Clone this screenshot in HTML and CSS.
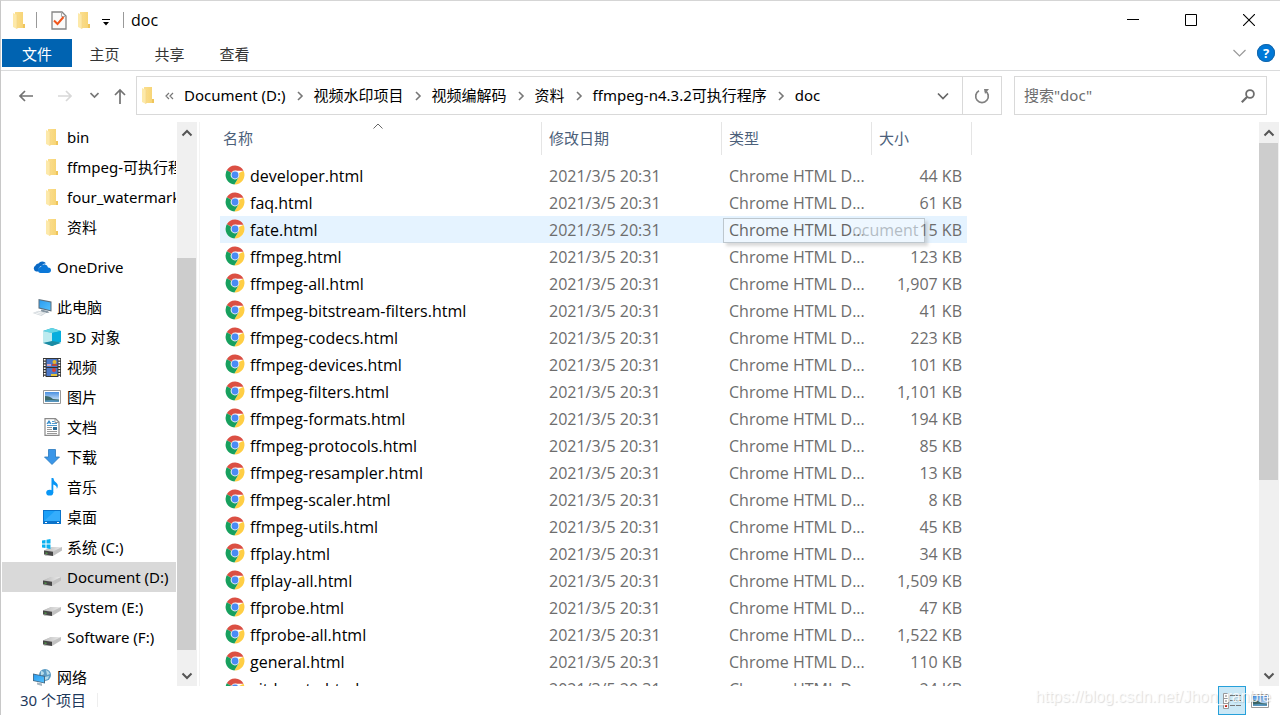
FILE: index.html
```
<!DOCTYPE html>
<html lang="zh-CN">
<head>
  <meta charset="UTF-8">
  <meta name="viewport" content="width=device-width, initial-scale=1.0">
  <title>doc</title>
  <link rel="stylesheet" href="styles.css">
</head>
<body>
  <!-- shared icons -->
  <svg class="sprite" aria-hidden="true">
    <defs>
      <linearGradient id="gFolder" x1="0" x2="1"><stop offset="0" stop-color="#fbdf8f"/><stop offset="1" stop-color="#f6d271"/></linearGradient>
      <linearGradient id="gDisk" x1="0" x2="1"><stop offset="0" stop-color="#b9b9b9"/><stop offset="1" stop-color="#ececec"/></linearGradient>
      <linearGradient id="gScreen" x1="0" y1="0" x2="1" y2="1"><stop offset="0" stop-color="#2a9cf0"/><stop offset="1" stop-color="#55c0fb"/></linearGradient>
      <linearGradient id="gSky" x1="0" y1="0" x2="0" y2="1"><stop offset="0" stop-color="#4a90e0"/><stop offset="1" stop-color="#e6f3fc"/></linearGradient>
    </defs>
    <symbol id="folder" viewBox="0 0 12 17">
      <path d="M2 0h8v12h2v4H4L2 15z" fill="url(#gFolder)"/>
      <path d="M10 12h2v4h-2z" fill="#efc55c"/>
      <path d="M0 1l4 2v14l-4-2z" fill="#fde9a9"/>
      <path d="M4 3v14" stroke="#f3d588" stroke-width=".6"/>
    </symbol>
    <symbol id="chrome" viewBox="0 0 20 20">
      <circle cx="10" cy="10" r="9.5" fill="#fff"/>
      <path d="M10 10L1.8 5.3A9.5 9.5 0 0 1 18.5 5.8H10z" fill="#db4f43"/>
      <path d="M10 10L18.5 5.8A9.5 9.5 0 0 1 9.4 19.5L13.8 12z" fill="#ffce44"/>
      <path d="M10 10L1.8 5.3A9.5 9.5 0 0 0 9.4 19.5L13.8 12z" fill="#17a05e"/>
      <circle cx="10" cy="10" r="4.4" fill="#f1f1f1"/>
      <circle cx="10" cy="10" r="3.4" fill="#4a8bf5"/>
    </symbol>
    <symbol id="disk" viewBox="0 0 18 18">
      <path d="M0 12.500L8 9h10v3.500L9 18H1.500L0 16.500z" fill="#c2c2c2"/>
      <path d="M0 12.500L8 9h10l-9 4.500z" fill="url(#gDisk)"/>
      <path d="M0 12.500l9 1.200V18L0 16.200z" fill="#474747"/>
      <path d="M1.500 15l2 .3" stroke="#54b948" stroke-width="1"/>
    </symbol>
    <symbol id="picture" viewBox="0 0 18 14">
      <path d="M.5.5h17v13H.5z" fill="#fff" stroke="#999"/>
      <path d="M2 2h14v10H2z" fill="url(#gSky)"/>
      <path d="M2 6q5 0 8 3l6 .5V12H2z" fill="#3e6a6b"/>
      <path d="M2 10.500q6-1 14 0V12H2z" fill="#5796bf"/>
    </symbol>
    <symbol id="right" viewBox="0 0 8 10"><path d="M2 1l4 4-4 4" fill="none" stroke="#777" stroke-width="1.600"/></symbol>
    <symbol id="up" viewBox="0 0 12 8"><path d="M1.500 6.500L6 2l4.500 4.500" fill="none" stroke="#555" stroke-width="2"/></symbol>
    <symbol id="down" viewBox="0 0 12 8"><path d="M1.500 1.500L6 6l4.500-4.500" fill="none" stroke="#555" stroke-width="2"/></symbol>
  </svg>

  <div class="window">
    <header class="title-bar">
      <svg class="folder" width="12" height="17"><use href="#folder"/></svg>
      <span class="divider"></span>
      <button class="icon-btn check" aria-label="属性">
        <svg width="16" height="19" viewBox="0 0 16 19"><path d="M1 1h10l4 4v13H1z" fill="#fafafa" stroke="#858585" stroke-width="1.300"/><path d="M10.500 1v4.500H15" fill="none" stroke="#aaa"/><path d="M3 9.500l3.500 3.500L12.500 6" fill="none" stroke="#f0561d" stroke-width="2"/></svg>
      </button>
      <button class="icon-btn" aria-label="新建文件夹"><svg width="12" height="17"><use href="#folder"/></svg></button>
      <button class="icon-btn customize" aria-label="自定义快速访问工具栏">
        <svg width="8" height="7" viewBox="0 0 8 7"><path d="M0 0h8v1H0zM1 3h6L4 6.500z" fill="#000"/></svg>
      </button>
      <span class="divider"></span>
      <h1>doc</h1>
      <div class="window-buttons">
        <button aria-label="最小化"><svg width="12" height="12" viewBox="0 0 12 12"><path d="M0 5.500h12" stroke="#000"/></svg></button>
        <button aria-label="最大化"><svg width="12" height="12" viewBox="0 0 12 12"><path d="M.5.5h11v11H.5z" fill="none" stroke="#000"/></svg></button>
        <button aria-label="关闭"><svg width="12" height="12" viewBox="0 0 12 12"><path d="M0 0l12 12M12 0L0 12" stroke="#000" stroke-width="1.100"/></svg></button>
      </div>
    </header>

    <nav class="tabs">
      <a href="#" class="active">文件</a>
      <a href="#">主页</a>
      <a href="#">共享</a>
      <a href="#">查看</a>
      <button class="icon-btn expand" aria-label="展开功能区"><svg width="13" height="8" viewBox="0 0 13 8"><path d="M.5 1l6 6 6-6" fill="none" stroke="#999" stroke-width="1.200"/></svg></button>
      <button class="help" aria-label="帮助">?</button>
    </nav>

    <div class="address-row">
      <div class="history">
        <button class="icon-btn" aria-label="后退"><svg width="16" height="12" viewBox="0 0 16 12"><path d="M15 6H2M7 1L2 6l5 5" fill="none" stroke="#737373" stroke-width="1.700"/></svg></button>
        <button class="icon-btn" aria-label="前进"><svg width="16" height="12" viewBox="0 0 16 12"><path d="M1 6h13M9 1l5 5-5 5" fill="none" stroke="#d8d8d8" stroke-width="1.700"/></svg></button>
        <button class="icon-btn" aria-label="最近浏览的位置"><svg width="9" height="7" viewBox="0 0 9 7"><path d="M.5 1l4 4 4-4" fill="none" stroke="#777" stroke-width="1.700"/></svg></button>
        <button class="icon-btn" aria-label="上移"><svg width="12" height="16" viewBox="0 0 12 16"><path d="M6 16V2M1 7l5-5 5 5" fill="none" stroke="#737373" stroke-width="1.700"/></svg></button>
      </div>
      <div class="address">
        <svg class="folder" width="12" height="17"><use href="#folder"/></svg>
        <svg class="more" width="9" height="8" viewBox="0 0 9 8"><path d="M4 1L1 4l3 3M8 1L5 4l3 3" fill="none" stroke="#777" stroke-width="1.200"/></svg>
        <a href="#">Document (D:)</a>
        <svg width="8" height="10"><use href="#right"/></svg>
        <a href="#">视频水印项目</a>
        <svg width="8" height="10"><use href="#right"/></svg>
        <a href="#">视频编解码</a>
        <svg width="8" height="10"><use href="#right"/></svg>
        <a href="#">资料</a>
        <svg width="8" height="10"><use href="#right"/></svg>
        <a href="#">ffmpeg-n4.3.2可执行程序</a>
        <svg width="8" height="10"><use href="#right"/></svg>
        <a href="#">doc</a>
        <button class="icon-btn drop" aria-label="以前的位置"><svg width="12" height="8" viewBox="0 0 12 8"><path d="M1 1.500l5 5 5-5" fill="none" stroke="#666" stroke-width="1.700"/></svg></button>
        <button class="icon-btn refresh" aria-label="刷新"><svg width="16" height="16" viewBox="0 0 16 16"><path d="M5 2.700A6.300 6.300 0 1 0 11 2.700" fill="none" stroke="#808080" stroke-width="1.700"/><path d="M10 1h5l-4 5z" fill="#808080"/></svg></button>
      </div>
      <label class="search">
        <input type="search" placeholder='搜索"doc"' aria-label="搜索">
        <svg width="14" height="14" viewBox="0 0 14 14"><circle cx="9" cy="5" r="3.900" fill="none" stroke="#6d6d6d" stroke-width="1.800"/><path d="M6 8L.8 13.200" stroke="#6d6d6d" stroke-width="2.200"/></svg>
      </label>
    </div>

    <main class="content">
      <nav class="tree">
        <ul>
          <li><a href="#"><svg width="12" height="17"><use href="#folder"/></svg>bin</a></li>
          <li><a href="#"><svg width="12" height="17"><use href="#folder"/></svg>ffmpeg-可执行程序</a></li>
          <li><a href="#"><svg width="12" height="17"><use href="#folder"/></svg>four_watermark</a></li>
          <li><a href="#"><svg width="12" height="17"><use href="#folder"/></svg>资料</a></li>
        </ul>
        <ul>
          <li class="root"><a href="#"><svg width="18" height="12" viewBox="0 0 18 12"><path d="M3 10.500a3.300 3.300 0 0 1-.5-6Q3.500 2.500 5.500 2.600A4.600 4.600 0 0 1 13 2.200Q9.500 2.500 8.600 5 5 5.500 5.200 10.500z" fill="#0a69c4"/><path d="M8 12a3 3 0 0 1-.2-6Q9 3 12 3.400q2.500.4 3 3Q18 6.600 18 9.300 17.800 12 15 12z" fill="#0b78d8"/></svg>OneDrive</a></li>
        </ul>
        <ul>
          <li class="root"><a href="#"><svg width="19" height="17" viewBox="0 0 19 17"><path d="M6 0l13 2.500v10L6 9.500z" fill="#5b6d7b"/><path d="M7 1.200l11 2.200v7.800L7 8.500z" fill="url(#gScreen)"/><path d="M9 10.500l6 1.500 2 1.500-3 .5-6-1.500z" fill="#8796a2"/><path d="M0 14l6-2.200 8 2L9 17z" fill="#d4dade"/><path d="M3 14l6 1.500M5 13l6 1.500" stroke="#fff" stroke-width=".7"/></svg>此电脑</a></li>
          <li><a href="#"><svg width="18" height="18" viewBox="0 0 18 18"><path d="M9 0l9 3v11l-9 4-9-4V3z" fill="#1aa0bd"/><path d="M0 3l9-3 9 3-9 2z" fill="#63d6e6"/><path d="M0 3l9 2v9l-9 1z" fill="#bdebef"/><path d="M9 5l9-2v11l-9-1z" fill="#06aede"/><path d="M0 15l9-2 9 2-9 3z" fill="#1b8ba3"/></svg>3D 对象</a></li>
          <li><a href="#"><svg width="18" height="19" viewBox="0 0 18 19"><path d="M0 0h18v19H0z" fill="#333"/><path d="M3.500 1h11v8h-11zM3.500 10h11v8h-11z" fill="#4b78c8"/><path d="M1.700 1v18M16.300 1v18" stroke="#fff" stroke-width="1.800" stroke-dasharray="1.500 1.300"/><circle cx="11.500" cy="4" r="2" fill="#e8b82b"/><path d="M9 6h5v2H9z" fill="#b94a3f"/><path d="M4 6h4v2H4z" fill="#dfa0b0"/><circle cx="11" cy="12" r="2" fill="#d84035"/><path d="M8 16h6v2H8z" fill="#e9c438"/></svg>视频</a></li>
          <li><a href="#"><svg width="18" height="14"><use href="#picture"/></svg>图片</a></li>
          <li><a href="#"><svg width="16" height="18" viewBox="0 0 16 18"><path d="M1 .7h10.500L15 4v13.300H1z" fill="#fff" stroke="#8a8a8a" stroke-width="1.200"/><path d="M11 1v3.500h4" fill="none" stroke="#999"/><path d="M3 6l2-3 2 3M4 5h2.500" fill="none" stroke="#2a86c8" stroke-width="1.100"/><path d="M8 3.500h2.500M8 5.500h5M3 7.500h10" stroke="#4f9ad0"/><path d="M3 9.500h5M3 11.500h5M3 13.500h10M3 15.500h10" stroke="#999"/><path d="M9 9h4v3H9z" fill="#2c6b98"/></svg>文档</a></li>
          <li><a href="#"><svg width="16" height="16" viewBox="0 0 16 16"><path d="M4.500.5h7V8h4L8 15.500.5 8h4z" fill="#3a96e8" stroke="#2878bd" stroke-width=".8"/></svg>下载</a></li>
          <li><a href="#"><svg width="12" height="18" viewBox="0 0 12 18"><ellipse cx="3.700" cy="14.700" rx="3.500" ry="2.900" fill="#0996f5"/><path d="M5.500 0h1.800q.4 3 3 4.800 2.800 2.500.5 6.200.5-3.500-3.500-4.500v8.500H5.500z" fill="#0996f5"/></svg>音乐</a></li>
          <li><a href="#"><svg width="18" height="14" viewBox="0 0 18 14"><path d="M0 0h18v14H0z" fill="#0b73ca"/><path d="M1 1h16v10H1z" fill="#1ba0f8"/><path d="M1 11L12 1h5v10z" fill="#35adfc"/><path d="M2 12.500h2M14 12.500h2" stroke="#fff"/></svg>桌面</a></li>
          <li><a href="#"><svg width="20" height="18" viewBox="0 0 20 18"><use href="#disk" x="2" width="18" height="18"/><path d="M0 2.500L3.500 2v3.500H0zM4.500 1.800L8.500 1v4.500h-4zM0 6.500h3.500V10L0 9.500zM4.500 6.500h4V11l-4-.8z" fill="#09b1f0"/></svg>系统 (C:)</a></li>
          <li><a href="#" class="selected"><svg width="18" height="18"><use href="#disk"/></svg>Document (D:)</a></li>
          <li><a href="#"><svg width="18" height="18"><use href="#disk"/></svg>System (E:)</a></li>
          <li><a href="#"><svg width="18" height="18"><use href="#disk"/></svg>Software (F:)</a></li>
        </ul>
        <ul>
          <li class="root"><a href="#"><svg width="18" height="17" viewBox="0 0 18 17"><circle cx="12" cy="6" r="6" fill="#5d9cc4"/><path d="M8 2q3 0 3 3l-3 2zM13 1q3 1 4 4l-3 1zM12 8l4-1-1 3-3 1z" fill="#b7dcea"/><path d="M0 4.500l12 2.500v7.500L0 12z" fill="#476a84"/><path d="M.8 5.500L11 7.700v5.700L.8 11.300z" fill="url(#gScreen)"/><path d="M4 13.500l5 1v2.500l-5-1.500z" fill="#a6b6c1"/></svg>网络</a></li>
        </ul>
      </nav>
      <div class="scrollbar tree-scroll">
        <button aria-label="向上滚动"><svg width="12" height="8"><use href="#up"/></svg></button>
        <div class="track"><div class="thumb"></div></div>
        <button aria-label="向下滚动"><svg width="12" height="8"><use href="#down"/></svg></button>
      </div>

      <section class="files">
        <table>
          <thead>
            <tr>
              <th class="name">名称<svg class="sort" width="10" height="6" viewBox="0 0 10 6"><path d="M.5 5.500L5 1l4.500 4.500" fill="none" stroke="#666"/></svg></th>
              <th class="date">修改日期</th>
              <th class="type">类型</th>
              <th class="size">大小</th>
            </tr>
          </thead>
          <tbody>
            <tr><td><svg width="20" height="20"><use href="#chrome"/></svg>developer.html</td><td>2021/3/5 20:31</td><td>Chrome HTML D...</td><td>44 KB</td></tr>
            <tr><td><svg width="20" height="20"><use href="#chrome"/></svg>faq.html</td><td>2021/3/5 20:31</td><td>Chrome HTML D...</td><td>61 KB</td></tr>
            <tr class="hover"><td><svg width="20" height="20"><use href="#chrome"/></svg>fate.html</td><td>2021/3/5 20:31</td><td>Chrome HTML D...<span class="tooltip">Chrome HTML Document</span></td><td>15 KB</td></tr>
            <tr><td><svg width="20" height="20"><use href="#chrome"/></svg>ffmpeg.html</td><td>2021/3/5 20:31</td><td>Chrome HTML D...</td><td>123 KB</td></tr>
            <tr><td><svg width="20" height="20"><use href="#chrome"/></svg>ffmpeg-all.html</td><td>2021/3/5 20:31</td><td>Chrome HTML D...</td><td>1,907 KB</td></tr>
            <tr><td><svg width="20" height="20"><use href="#chrome"/></svg>ffmpeg-bitstream-filters.html</td><td>2021/3/5 20:31</td><td>Chrome HTML D...</td><td>41 KB</td></tr>
            <tr><td><svg width="20" height="20"><use href="#chrome"/></svg>ffmpeg-codecs.html</td><td>2021/3/5 20:31</td><td>Chrome HTML D...</td><td>223 KB</td></tr>
            <tr><td><svg width="20" height="20"><use href="#chrome"/></svg>ffmpeg-devices.html</td><td>2021/3/5 20:31</td><td>Chrome HTML D...</td><td>101 KB</td></tr>
            <tr><td><svg width="20" height="20"><use href="#chrome"/></svg>ffmpeg-filters.html</td><td>2021/3/5 20:31</td><td>Chrome HTML D...</td><td>1,101 KB</td></tr>
            <tr><td><svg width="20" height="20"><use href="#chrome"/></svg>ffmpeg-formats.html</td><td>2021/3/5 20:31</td><td>Chrome HTML D...</td><td>194 KB</td></tr>
            <tr><td><svg width="20" height="20"><use href="#chrome"/></svg>ffmpeg-protocols.html</td><td>2021/3/5 20:31</td><td>Chrome HTML D...</td><td>85 KB</td></tr>
            <tr><td><svg width="20" height="20"><use href="#chrome"/></svg>ffmpeg-resampler.html</td><td>2021/3/5 20:31</td><td>Chrome HTML D...</td><td>13 KB</td></tr>
            <tr><td><svg width="20" height="20"><use href="#chrome"/></svg>ffmpeg-scaler.html</td><td>2021/3/5 20:31</td><td>Chrome HTML D...</td><td>8 KB</td></tr>
            <tr><td><svg width="20" height="20"><use href="#chrome"/></svg>ffmpeg-utils.html</td><td>2021/3/5 20:31</td><td>Chrome HTML D...</td><td>45 KB</td></tr>
            <tr><td><svg width="20" height="20"><use href="#chrome"/></svg>ffplay.html</td><td>2021/3/5 20:31</td><td>Chrome HTML D...</td><td>34 KB</td></tr>
            <tr><td><svg width="20" height="20"><use href="#chrome"/></svg>ffplay-all.html</td><td>2021/3/5 20:31</td><td>Chrome HTML D...</td><td>1,509 KB</td></tr>
            <tr><td><svg width="20" height="20"><use href="#chrome"/></svg>ffprobe.html</td><td>2021/3/5 20:31</td><td>Chrome HTML D...</td><td>47 KB</td></tr>
            <tr><td><svg width="20" height="20"><use href="#chrome"/></svg>ffprobe-all.html</td><td>2021/3/5 20:31</td><td>Chrome HTML D...</td><td>1,522 KB</td></tr>
            <tr><td><svg width="20" height="20"><use href="#chrome"/></svg>general.html</td><td>2021/3/5 20:31</td><td>Chrome HTML D...</td><td>110 KB</td></tr>
            <tr><td><svg width="20" height="20"><use href="#chrome"/></svg>git-howto.html</td><td>2021/3/5 20:31</td><td>Chrome HTML D...</td><td>24 KB</td></tr>
          </tbody>
        </table>
      </section>
      <div class="scrollbar file-scroll">
        <button aria-label="向上滚动"><svg width="12" height="8"><use href="#up"/></svg></button>
        <div class="track"><div class="thumb"></div></div>
        <button aria-label="向下滚动"><svg width="12" height="8"><use href="#down"/></svg></button>
      </div>
    </main>

    <footer class="status">
      <span class="count">30 个项目</span>
      <button class="view active" aria-label="详细信息"><svg width="19" height="16" viewBox="0 0 19 16"><path d="M.5.5h5v15h-5zM.5 5.500h5M.5 10.500h5" fill="#fff" stroke="#999"/><path d="M2 2.500h2v1H2zM2 7.500h2v1H2z" fill="#777"/><path d="M2 12h2v2H2z" fill="#d0241b"/><path d="M7 2.500h5M13 2.500h5M7 7.500h5M13 7.500h5M7 12.500h5M13 12.500h5" stroke="#777"/></svg></button>
      <button class="view" aria-label="大缩略图"><svg width="18" height="14"><use href="#picture"/></svg></button>
      <span class="watermark">https://blog.csdn.net/Jhon_ranble</span>
    </footer>
  </div>
</body>
</html>
```
FILE: styles.css
```
* {
  box-sizing: border-box;
}
body {
  margin: 0;
  font-family: "Noto Sans", "Noto Sans CJK SC", sans-serif;
  font-size: 15px;
  line-height: 20px;
  color: #000;
  background: #fff;
}
a {
  color: inherit;
  text-decoration: none;
}
button {
  padding: 0;
  border: none;
  background: none;
  font: inherit;
}
svg {
  flex: none;
}
ul {
  margin: 0 0 10px;
  padding: 0;
  list-style: none;
}
.sprite {
  position: absolute;
  width: 0;
  height: 0;
}
.window {
  display: flex;
  flex-direction: column;
  height: 100vh;
  border-top: 1px solid #d5d5d5;
  border-left: 1px solid #c8c8c8;
  overflow: hidden;
}
.icon-btn {
  display: flex;
  align-items: center;
  justify-content: center;
}

/* Title bar */
.title-bar {
  display: flex;
  align-items: center;
  height: 38px;
  padding-left: 12px;
  flex: none;
}
.divider {
  width: 1px;
  height: 16px;
  background: #999;
}
.title-bar .folder {
  margin-right: 11px;
}
.check {
  margin: 0 11px 0 14px;
}
.customize {
  margin: 4px 13px 0 12px;
}
.title-bar h1 {
  margin: 0 0 0 7px;
  font-family: "Open Sans", sans-serif;
  font-size: 16px;
  font-weight: normal;
}
.window-buttons {
  display: flex;
  margin-left: auto;
  padding-right: 2px;
}
.window-buttons button {
  display: flex;
  align-items: center;
  justify-content: center;
  width: 58px;
  height: 38px;
}

/* Ribbon tabs */
.tabs {
  display: flex;
  align-items: center;
  height: 32px;
  flex: none;
  padding: 0 5px 4px 1px;
  border-bottom: 1px solid #dadbdc;
  color: #333;
}
.tabs a {
  width: 65px;
  height: 28px;
  line-height: 30px;
  text-align: center;
}
.tabs .active {
  width: 70px;
  background: #0063b1;
  color: #fff;
}
.expand {
  margin-left: auto;
}
.help {
  width: 18px;
  height: 18px;
  margin-left: 11px;
  border-radius: 50%;
  background: #0078d7;
  box-shadow: inset 0 0 0 1px #1666a8;
  color: #fff;
  font-size: 13px;
  font-weight: bold;
  line-height: 18px;
}

/* Address bar */
.address-row {
  display: flex;
  height: 51px;
  flex: none;
  padding: 5px 13px 7px 0;
}
.history {
  display: flex;
  align-items: center;
  width: 135px;
  padding-left: 17px;
}
.history button:nth-child(2) {
  margin-left: 23px;
}
.history button:nth-child(3) {
  margin-left: 17px;
}
.history button:nth-child(4) {
  margin-left: 15px;
}
.address {
  display: flex;
  align-items: center;
  flex: 1;
  border: 1px solid #d9d9d9;
  padding-left: 5px;
}
.address a {
  margin: 0 10px;
  padding-bottom: 2px;
  white-space: nowrap;
}
.address .more {
  margin-left: 11px;
}
.drop {
  margin-left: auto;
  width: 38px;
}
.refresh {
  width: 39px;
  height: 37px;
  border-left: 1px solid #d9d9d9;
}
.search {
  display: flex;
  align-items: center;
  width: 253px;
  margin-left: 12px;
  padding: 0 11px 0 9px;
  border: 1px solid #d9d9d9;
}
.search input {
  flex: 1;
  min-width: 0;
  padding: 0 0 2px;
  border: none;
  outline: none;
  font: inherit;
}
.search input::placeholder {
  color: #6d6d6d;
}

/* Main area */
.content {
  display: flex;
  flex: 1;
  min-height: 0;
}
.tree {
  width: 175px;
  padding-left: 1px;
  overflow: hidden;
}
.tree a {
  display: flex;
  align-items: center;
  height: 30px;
  padding-left: 65px;
  white-space: nowrap;
}
.tree .root a {
  padding-left: 55px;
}
.tree svg {
  width: 20px;
  margin: 0 5px 0 -25px;
}
.tree .selected {
  background: #d9d9d9;
}
.scrollbar {
  display: flex;
  flex-direction: column;
  width: 20px;
  background: #f0f0f0;
}
.scrollbar button {
  display: flex;
  align-items: center;
  justify-content: center;
  height: 21px;
}
.scrollbar .track {
  flex: 1;
}
.scrollbar .thumb {
  width: 19px;
  background: #cdcdcd;
}
.tree-scroll {
  margin-left: 1px;
}
.tree-scroll .thumb {
  height: 75%;
  margin-top: 115px;
}
.file-scroll {
  margin-right: 1px;
}
.file-scroll .thumb {
  height: 64.5%;
}
.files {
  flex: 1;
  min-width: 0;
  margin-left: 2px;
  padding-left: 20px;
  border-left: 1px solid #f3f3f3;
  overflow: hidden;
}
table {
  width: 752px;
  table-layout: fixed;
  border-collapse: separate;
  border-spacing: 0;
}
th {
  position: relative;
  height: 33px;
  padding: 0 7px 2px;
  border-right: 1px solid #e5e5e5;
  color: #4c607a;
  font-weight: normal;
  text-align: left;
}
.name {
  width: 322px;
  padding-left: 3px;
}
.date {
  width: 180px;
}
.type {
  width: 150px;
}
.size {
  width: 100px;
}
.sort {
  position: absolute;
  top: 1px;
  left: 50%;
  margin-left: -8px;
}
/* gap between the header and the first row */
tbody::before {
  content: "";
  display: block;
  height: 7px;
}
td {
  position: relative;
  height: 27px;
  padding: 0 7px;
  color: #6d6d6d;
  font-family: "Open Sans", sans-serif;
  font-size: 16px;
  white-space: nowrap;
}
td:first-child {
  padding-left: 5px;
  color: #000;
}
td:last-child {
  padding-right: 5px;
  border-right: 5px solid #fff;
  text-align: right;
}
td svg {
  margin: -2px 5px 0 0;
  vertical-align: -3px;
}
.hover td {
  background: #e5f3ff;
}
.tooltip {
  position: absolute;
  top: 2px;
  left: 1px;
  z-index: 1;
  padding: 1px 5px;
  border: 1px solid #767676;
  background: #fff;
  box-shadow: 3px 3px 3px #999;
  color: #575757;
  line-height: 21px;
  opacity: 0.35;
}

/* Status bar */
.status {
  position: relative;
  display: flex;
  align-items: center;
  height: 29px;
  flex: none;
  padding: 0 6px 0 19px;
}
.count {
  margin: 0 auto 2px 0;
  padding-right: 11px;
  border-right: 1px solid #eee;
  color: #1e395b;
  line-height: 14px;
}
.view {
  display: flex;
  align-items: center;
  justify-content: center;
  width: 28px;
  height: 29px;
}
.status .active {
  border: 1px solid #26a0da;
  background: #cbe8f6;
}
.watermark {
  position: absolute;
  right: 9px;
  top: 1px;
  font-family: "Liberation Sans", sans-serif;
  font-size: 16px;
  color: rgba(255, 255, 255, 0.8);
  text-shadow: 1px 1px 1px rgba(0, 0, 0, 0.14);
}
```
